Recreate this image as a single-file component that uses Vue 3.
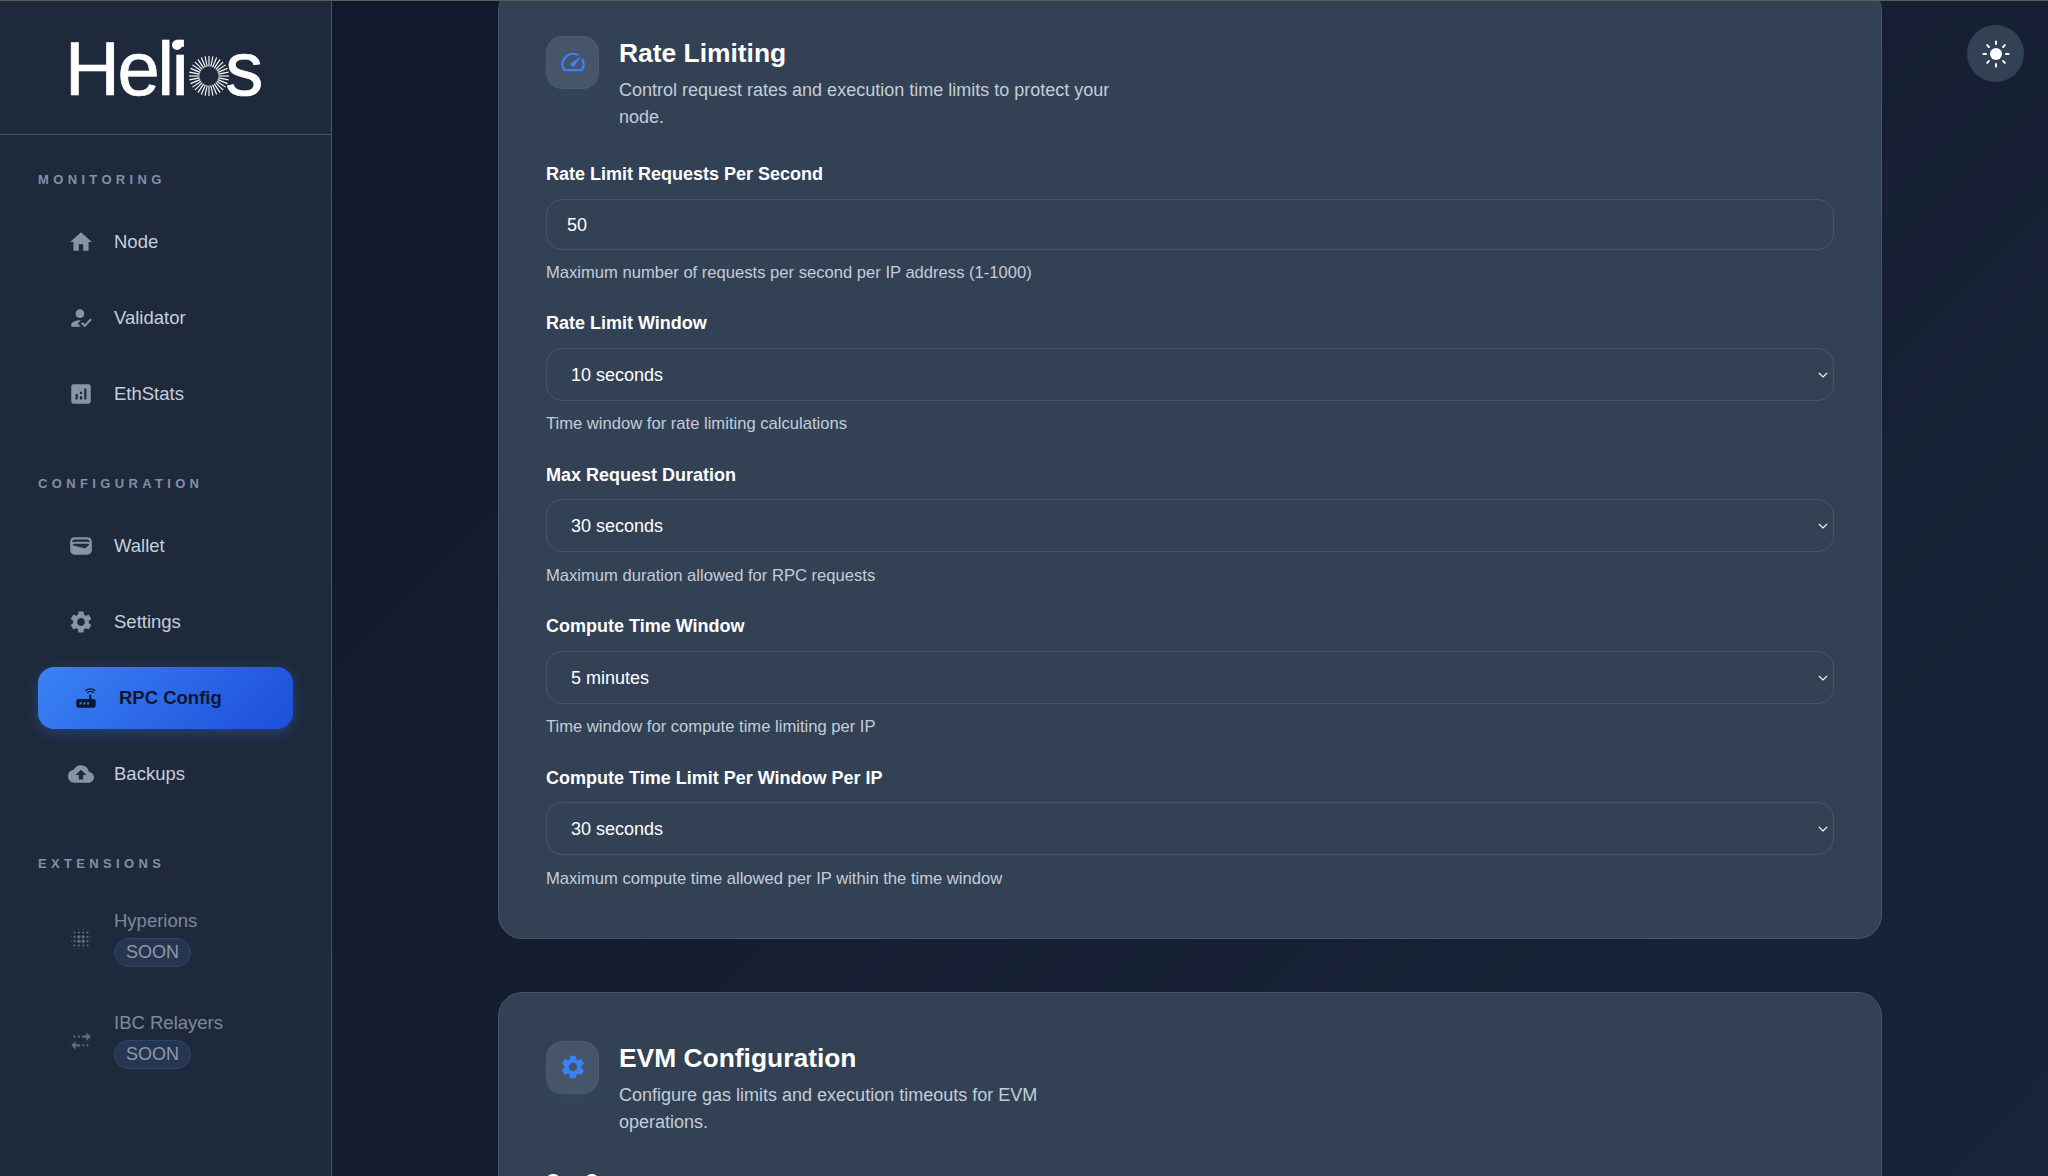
<script setup>
const icons = {
  home: 'M10 20v-6h4v6h5v-8h3L12 3 2 12h3v8z',
  validator: 'M9 17l3-2.94c-.39-.04-.68-.06-1-.06-2.67 0-8 1.34-8 4v2h9l-3-3zm2-5c2.21 0 4-1.79 4-4s-1.79-4-4-4-4 1.79-4 4 1.79 4 4 4m4.47 8.5L12 17l1.4-1.41 2.07 2.08 5.13-5.17 1.4 1.41z',
  stats: 'M19 3H5c-1.1 0-2 .9-2 2v14c0 1.1.9 2 2 2h14c1.1 0 2-.9 2-2V5c0-1.1-.9-2-2-2zM9 17H7v-5h2v5zm4 0h-2v-3h2v3zm0-5h-2v-2h2v2zm4 5h-2V7h2v10z',
  wallet: 'M18 4H6C3.79 4 2 5.79 2 8v8c0 2.21 1.79 4 4 4h12c2.21 0 4-1.79 4-4V8c0-2.21-1.79-4-4-4zm-1.86 9.77c-.24.2-.57.28-.88.2L4.15 11.25C4.45 10.52 5.16 10 6 10h12c.67 0 1.26.34 1.63.84l-3.49 2.93zM6 6h12c1.1 0 2 .9 2 2v.55C19.41 8.21 18.73 8 18 8H6c-.73 0-1.41.21-2 .55V8c0-1.1.9-2 2-2z',
  settings: 'M19.14 12.94c.04-.3.06-.61.06-.94 0-.32-.02-.64-.07-.94l2.03-1.58c.18-.14.23-.41.12-.61l-1.92-3.32c-.12-.22-.37-.29-.59-.22l-2.39.96c-.5-.38-1.03-.7-1.62-.94l-.36-2.54c-.04-.24-.24-.41-.48-.41h-3.84c-.24 0-.43.17-.47.41l-.36 2.54c-.59.24-1.13.57-1.62.94l-2.39-.96c-.22-.08-.47 0-.59.22L2.74 8.87c-.12.21-.08.47.12.61l2.03 1.58c-.05.3-.09.63-.09.94s.02.64.07.94l-2.03 1.58c-.18.14-.23.41-.12.61l1.92 3.32c.12.22.37.29.59.22l2.39-.96c.5.38 1.03.7 1.62.94l.36 2.54c.05.24.24.41.48.41h3.84c.24 0 .44-.17.47-.41l.36-2.54c.59-.24 1.13-.56 1.62-.94l2.39.96c.22.08.47 0 .59-.22l1.92-3.32c.12-.22.07-.47-.12-.61l-2.01-1.58zM12 15.6c-1.98 0-3.6-1.62-3.6-3.6s1.62-3.6 3.6-3.6 3.6 1.62 3.6 3.6-1.62 3.6-3.6 3.6z',
  router: 'M20.2 5.9l.8-.8C19.6 3.7 17.8 3 16 3s-3.6.7-5 2.1l.8.8C13 4.8 14.5 4.2 16 4.2s3 .6 4.2 1.7zm-.9.8c-.9-.9-2.1-1.4-3.3-1.4s-2.4.5-3.3 1.4l.8.8c.7-.7 1.6-1 2.5-1 .9 0 1.8.3 2.5 1l.8-.8zM19 13h-2V9h-2v4H5c-1.1 0-2 .9-2 2v4c0 1.1.9 2 2 2h14c1.1 0 2-.9 2-2v-4c0-1.1-.9-2-2-2zM8 18H6v-2h2v2zm3.5 0h-2v-2h2v2zm3.5 0h-2v-2h2v2z',
  cloud: 'M19.35 10.04C18.67 6.59 15.64 4 12 4 9.11 4 6.6 5.64 5.35 8.04 2.34 8.36 0 10.91 0 14c0 3.31 2.69 6 6 6h13c2.76 0 5-2.24 5-5 0-2.64-2.05-4.78-4.65-4.96zM14 13v4h-4v-4H7l5-5 5 5h-3z',
  relay: 'M17 4l4 4-4 4V9h-4V7h4V4zm-7 3c-.55 0-1 .45-1 1s.45 1 1 1 1-.45 1-1-.45-1-1-1zm-4 0c-.55 0-1 .45-1 1s.45 1 1 1 1-.45 1-1-.45-1-1-1zm1 10h4v-2H7v-3l-4 4 4 4v-3zm7 0c.55 0 1-.45 1-1s-.45-1-1-1-1 .45-1 1 .45 1 1 1zm4 0c.55 0 1-.45 1-1s-.45-1-1-1-1 .45-1 1 .45 1 1 1z',
  speed: 'M20.38 8.57l-1.23 1.85a8 8 0 0 1-.22 7.58H5.07A8 8 0 0 1 15.58 6.85l1.85-1.23A10 10 0 0 0 3.35 19a2 2 0 0 0 1.72 1h13.85a2 2 0 0 0 1.74-1 10 10 0 0 0-.27-10.44zm-9.79 6.84a2 2 0 0 0 2.83 0l5.66-8.49-8.49 5.66a2 2 0 0 0 0 2.83z'
}

const sections = [
  { title: 'Monitoring', items: [
    { label: 'Node', icon: 'home' },
    { label: 'Validator', icon: 'validator' },
    { label: 'EthStats', icon: 'stats' }
  ] },
  { title: 'Configuration', items: [
    { label: 'Wallet', icon: 'wallet' },
    { label: 'Settings', icon: 'settings' },
    { label: 'RPC Config', icon: 'router', active: true },
    { label: 'Backups', icon: 'cloud' }
  ] },
  { title: 'Extensions', items: [
    { label: 'Hyperions', icon: 'blur', soon: true },
    { label: 'IBC Relayers', icon: 'relay', soon: true }
  ] }
]

const blurDots = []
const inner = [6, 10, 14, 18]
for (const y of inner) {
  for (const x of inner) {
    const mid = (x === 10 || x === 14) && (y === 10 || y === 14)
    blurDots.push({ cx: x, cy: y, r: mid ? 1.5 : 1 })
  }
}
for (const v of [10, 14]) {
  for (const e of [3, 21]) {
    blurDots.push({ cx: e, cy: v, r: 0.5 })
    blurDots.push({ cx: v, cy: e, r: 0.5 })
  }
}

const rays = Array.from({ length: 32 }, (_, i) => {
  const a = (i / 32) * Math.PI * 2
  const start = 9.5
  const end = 20
  return {
    x1: 20 + Math.cos(a) * start,
    y1: 20 + Math.sin(a) * start,
    x2: 20 + Math.cos(a) * end,
    y2: 20 + Math.sin(a) * end
  }
})

const sunRays = Array.from({ length: 8 }, (_, i) => {
  const a = (i / 8) * Math.PI * 2
  return {
    x1: 14 + Math.cos(a) * 10,
    y1: 14 + Math.sin(a) * 10,
    x2: 14 + Math.cos(a) * 12.5,
    y2: 14 + Math.sin(a) * 12.5
  }
})

const rateFields = [
  { label: 'Rate Limit Window', value: '10 seconds', help: 'Time window for rate limiting calculations' },
  { label: 'Max Request Duration', value: '30 seconds', help: 'Maximum duration allowed for RPC requests' },
  { label: 'Compute Time Window', value: '5 minutes', help: 'Time window for compute time limiting per IP' },
  { label: 'Compute Time Limit Per Window Per IP', value: '30 seconds', help: 'Maximum compute time allowed per IP within the time window' }
]
</script>

<template>
  <div class="page">
    <aside class="sidebar">
      <div class="brand">
        <div class="logo">
          <span class="logo-text">Heli<i class="logo-dot"></i></span>
          <svg class="logo-sun" viewBox="0 0 40 40" width="40" height="40">
            <line v-for="(r, i) in rays" :key="i" :x1="r.x1" :y1="r.y1" :x2="r.x2" :y2="r.y2" stroke="#fff" stroke-width="1.15" />
          </svg>
          <span class="logo-text logo-s">s</span>
        </div>
      </div>
      <nav class="nav">
        <section v-for="s in sections" :key="s.title" class="nav-section">
          <h3 class="nav-title">{{ s.title }}</h3>
          <div class="nav-list">
            <a v-for="item in s.items" :key="item.label" class="nav-item" :class="{ active: item.active, soon: item.soon }">
              <svg class="nav-icon" viewBox="0 0 24 24" fill="currentColor">
                <template v-if="item.icon === 'blur'">
                  <circle v-for="(d, i) in blurDots" :key="i" :cx="d.cx" :cy="d.cy" :r="d.r" />
                </template>
                <path v-else :d="icons[item.icon]" />
              </svg>
              <span class="nav-text">
                <span>{{ item.label }}</span>
                <span v-if="item.soon" class="soon-pill">SOON</span>
              </span>
            </a>
          </div>
        </section>
      </nav>
    </aside>

    <main class="main">
      <section class="card first">
        <header class="card-head">
          <div class="card-icon">
            <svg viewBox="0 0 24 24" width="28" height="28" fill="currentColor"><path :d="icons.speed" /></svg>
          </div>
          <div>
            <h2 class="card-title">Rate Limiting</h2>
            <p class="card-desc">Control request rates and execution time limits to protect your node.</p>
          </div>
        </header>

        <div class="field input-field">
          <div class="label">Rate Limit Requests Per Second</div>
          <div class="input">50</div>
          <div class="help">Maximum number of requests per second per IP address (1-1000)</div>
        </div>

        <div v-for="f in rateFields" :key="f.label" class="field">
          <div class="label">{{ f.label }}</div>
          <div class="select">
            <span>{{ f.value }}</span>
            <svg class="chevron" viewBox="0 0 10 6" width="10" height="6" fill="none" stroke="currentColor" stroke-width="1.2"><path d="M.8.8 5 5 9.2.8" /></svg>
          </div>
          <div class="help">{{ f.help }}</div>
        </div>
      </section>

      <section class="card second">
        <header class="card-head">
          <div class="card-icon">
            <svg viewBox="0 0 24 24" width="28" height="28" fill="currentColor"><path :d="icons.settings" /></svg>
          </div>
          <div>
            <h2 class="card-title">EVM Configuration</h2>
            <p class="card-desc">Configure gas limits and execution timeouts for EVM operations.</p>
          </div>
        </header>
        <div class="field">
          <div class="label">Gas Cap</div>
        </div>
      </section>
    </main>

    <button class="theme-toggle" aria-label="Toggle theme">
      <svg viewBox="0 0 28 28" width="28" height="28">
        <circle cx="14" cy="14" r="6" fill="#fff" />
        <line v-for="(r, i) in sunRays" :key="i" :x1="r.x1" :y1="r.y1" :x2="r.x2" :y2="r.y2" stroke="#fff" stroke-width="2" stroke-linecap="round" />
      </svg>
    </button>
  </div>
</template>

<style>
html, body { margin: 0; background: #0f172a; }
</style>

<style scoped>
.page {
  position: relative;
  display: flex;
  width: 2048px;
  height: 1176px;
  box-sizing: border-box;
  border-top: 1px solid #5b5b58;
  overflow: hidden;
  font-family: "Liberation Sans", Arial, sans-serif;
  background: linear-gradient(135deg, #0f172a 0%, #1a2438 100%);
}
.sidebar {
  flex: none;
  width: 332px;
  box-sizing: border-box;
  background: #1e293b;
  border-right: 1px solid #475569;
}
.brand {
  height: 134px;
  box-sizing: border-box;
  border-bottom: 1px solid #475569;
  padding: 23px 0 0 65px;
}
.logo {
  display: flex;
  align-items: flex-start;
  height: 90px;
  color: #fff;
}
.logo-text {
  position: relative;
  font-size: 76px;
  line-height: 90px;
  letter-spacing: -2.4px;
  -webkit-text-stroke: .7px #fff;
}
.logo-dot {
  position: absolute;
  right: 4.5px;
  top: 16px;
  width: 10px;
  height: 10px;
  border-radius: 50%;
  background: #fff;
}
.logo-sun {
  margin: 32px 0 0 3px;
  flex: none;
}
.logo-s { margin-left: -4px; }
.nav { padding: 36px 38px 0; }
.nav-section { margin-bottom: 50px; }
.nav-title {
  margin: 0 0 23px;
  height: 16px;
  padding-top: 1px;
  font-size: 13px;
  line-height: 16px;
  font-weight: 700;
  letter-spacing: 4.35px;
  text-transform: uppercase;
  color: #8090a6;
}
.nav-list { display: flex; flex-direction: column; gap: 14px; }
.nav-item {
  display: flex;
  align-items: center;
  gap: 20px;
  min-height: 62px;
  box-sizing: border-box;
  padding: 16px 16px 16px 30px;
  border-radius: 16px;
  font-size: 18.5px;
  line-height: 30px;
  color: #c5cfdb;
}
.nav-icon {
  flex: none;
  width: 26px;
  height: 26px;
  color: #8694a8;
}
.nav-item.active {
  padding-left: 35px;
  color: #0f172a;
  font-weight: 700;
  background: linear-gradient(135deg, #3b82f6 0%, #1d4ed8 100%);
  box-shadow: 0 4px 14px rgba(59, 130, 246, .3);
}
.nav-item.active .nav-icon { color: #0f172a; }
.nav-text { display: flex; flex-direction: column; align-items: flex-start; gap: 7px; }
.nav-item.soon { line-height: 20px; }
.nav-item.soon .nav-text { color: #7e8a9c; }
.nav-item.soon .nav-icon { color: #5f6b7e; }
.soon-pill {
  box-sizing: border-box;
  height: 29px;
  padding: 0 11px;
  border: 1px solid #2c4570;
  border-radius: 15px;
  background: #263650;
  font-size: 18px;
  line-height: 27px;
  color: #8d99aa;
}

.main {
  flex: 1;
  min-width: 0;
  padding: 0 166.5px 0 166px;
  box-sizing: border-box;
}
.card {
  box-sizing: border-box;
  padding: 48px 47px 0;
  border: 1px solid #475569;
  border-radius: 24px;
  background: #334155;
}
.card.first {
  margin-top: -14.5px;
  margin-bottom: 53px;
  height: 952px;
}
.card-head {
  display: flex;
  gap: 20px;
  height: 128px;
  margin-bottom: 0;
}
.second .card-head { height: 130px; }
.card-icon {
  flex: none;
  width: 53px;
  height: 53px;
  display: flex;
  align-items: center;
  justify-content: center;
  box-sizing: border-box;
  border: 1px solid #4c5b73;
  border-radius: 16px;
  background: #475569;
  color: #3b82f6;
  box-shadow: 0 10px 24px rgba(59, 130, 246, .06);
}
.card-title {
  margin: 0;
  font-size: 26.4px;
  line-height: 34px;
  font-weight: 700;
  color: #fff;
}
.card-desc {
  margin: 7px 0 0;
  max-width: 500px;
  font-size: 18px;
  line-height: 27px;
  color: #c3cdd9;
}
.field { margin-bottom: 31.67px; }
.label {
  height: 20px;
  margin-bottom: 14.5px;
  font-size: 18px;
  line-height: 20px;
  font-weight: 700;
  color: #fff;
}
.input-field .label { margin-bottom: 15px; }
.input, .select {
  box-sizing: border-box;
  border: 1px solid #475569;
  border-radius: 16px;
  font-size: 18px;
  color: #fff;
}
.input {
  height: 51px;
  padding: 0 20px;
  line-height: 51px;
}
.select {
  position: relative;
  height: 53px;
  padding: 0 24px;
  line-height: 53px;
}
.chevron {
  position: absolute;
  right: 4.5px;
  top: 23px;
}
.help {
  height: 18px;
  margin-top: 14.5px;
  font-size: 16.6px;
  line-height: 18px;
  color: #c3cdd9;
}
.input-field { margin-bottom: 31px; }
.theme-toggle {
  position: absolute;
  top: 24px;
  right: 24px;
  width: 57px;
  height: 57px;
  padding: 0;
  display: flex;
  align-items: center;
  justify-content: center;
  border: 0;
  border-radius: 50%;
  background: #334155;
}
</style>
